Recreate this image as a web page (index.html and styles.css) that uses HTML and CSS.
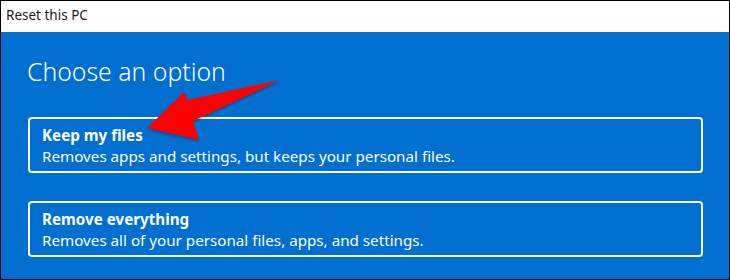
FILE: index.html
```html
<!DOCTYPE html>
<html>
<head>
<meta charset="utf-8">
<link rel="stylesheet" href="styles.css">
</head>
<body>
<div class="frame">
  <div class="titlebar">Reset this PC</div>
  <div class="panel">
    <h1 class="heading">Choose an option</h1>
    <div class="option">
      <div class="opt-title">Keep my files</div>
      <div class="opt-desc">Removes apps and settings, but keeps your personal files.</div>
    </div>
    <div class="option">
      <div class="opt-title">Remove everything</div>
      <div class="opt-desc">Removes all of your personal files, apps, and settings.</div>
    </div>
    <svg class="arrow" width="730" height="280" viewBox="0 0 730 280">
      <polygon points="280,80 188,100 184,92 147,128 199,140 193,121" fill="#ff0000"/>
    </svg>
  </div>
</div>
</body>
</html>
```
FILE: styles.css
```css
html, body {
  margin: 0;
  padding: 0;
  width: 730px;
  height: 280px;
  overflow: hidden;
  background: #000;
}
.frame {
  box-sizing: border-box;
  width: 730px;
  height: 280px;
  border: 1px solid #000;
  display: flex;
  flex-direction: column;
  font-family: "Noto Sans", "Open Sans", sans-serif;
}
.titlebar {
  height: 31px;
  background: #fff;
  color: #1a1a1a;
  font-size: 13.5px;
  line-height: 29px;
  padding-left: 5px;
  flex: none;
}
.panel {
  flex: 1;
  background: #006fd0;
  padding: 0 26px 0 27px;
  display: flex;
  flex-direction: column;
}
.heading {
  margin: 22px 0 0 -1px;
  font-weight: 300;
  font-size: 24.8px;
  line-height: 34px;
  color: #fff;
  height: 34px;
}
.option {
  border: 2px solid #fff;
  border-radius: 4px;
  height: 56px;
  box-sizing: border-box;
  padding: 6px 12px 0 12px;
  color: #fff;
  font-size: 15.2px;
  line-height: 21px;
}
.option + .option { margin-top: 28px; }
.heading + .option { margin-top: 29px; }
.opt-title { font-weight: 700; }
.arrow {
  position: absolute;
  left: 0;
  top: 0;
  pointer-events: none;
  filter: drop-shadow(0 2px 1px rgba(0,0,0,0.25));
}
```
